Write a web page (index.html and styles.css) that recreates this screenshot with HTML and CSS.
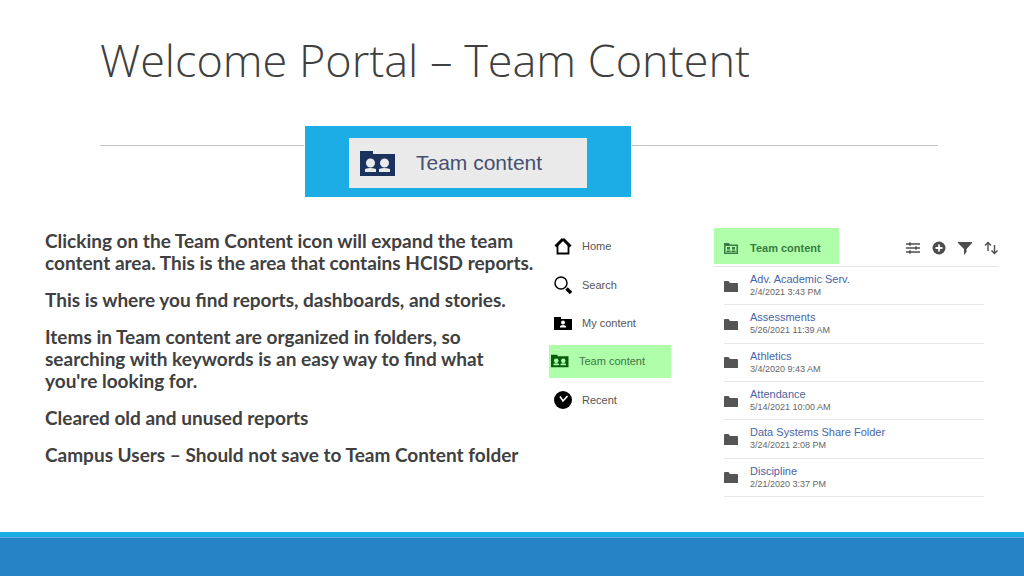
FILE: index.html
```html
<!DOCTYPE html>
<html lang="en">
<head>
<meta charset="utf-8">
<title>Welcome Portal – Team Content</title>
<link rel="stylesheet" href="styles.css">
</head>
<body>
<svg class="defs" aria-hidden="true">
  <symbol id="team" viewBox="0 0 36 27"><path fill-rule="evenodd" d="M0 1H13V4H35V26H0ZM6 13a4 4 0 1 0 9 0a4 4 0 1 0-9 0M20 13a4 4 0 1 0 9 0a4 4 0 1 0-9 0M5 22V19Q8 18 10 18Q13 18 16 19V22ZM19 22V19Q22 18 24 18Q27 18 30 19V22Z"/></symbol>
  <symbol id="folder" viewBox="0 0 14 11"><path d="M0 1Q0 0 1 0H4.500L6 2H13Q14 2 14 3V11H0Z"/></symbol>
</svg>
<main class="slide">
  <h1 class="title">Welcome Portal – Team Content</h1>
  <div class="divider">
    <hr class="rule">
    <div class="banner">
      <div class="banner-label"><svg class="banner-icon"><use href="#team"/></svg>Team content</div>
    </div>
  </div>
  <div class="content">
    <section class="copy">
      <p>Clicking on the Team Content icon will expand the team content area. This is the area that contains HCISD reports.</p>
      <p>This is where you find reports, dashboards, and stories.</p>
      <p>Items in Team content are organized in folders, so searching with keywords is an easy way to find what you're looking for.</p>
      <p>Cleared old and unused reports</p>
      <p>Campus Users – Should not save to Team Content folder</p>
    </section>
    <nav class="nav">
      <a class="nav-item" href="#home"><svg class="nav-icon" viewBox="0 0 18 18"><path d="M9 2L1.500 9.500M9 2L16.500 9.500" fill="none" stroke="currentColor" stroke-width="3"/><path d="M3.500 8V16.500H14.500V8" fill="none" stroke="currentColor" stroke-width="1.800"/></svg>Home</a>
      <a class="nav-item" href="#search"><svg class="nav-icon" viewBox="0 0 18 18"><circle cx="7" cy="7" r="6" fill="none" stroke="currentColor" stroke-width="1.500"/><path d="M12.500 12.500L17 17" stroke="currentColor" stroke-width="3.500"/></svg>Search</a>
      <a class="nav-item" href="#my"><svg class="nav-icon" viewBox="0 0 18 18"><path fill-rule="evenodd" d="M0 3H7V5H18V16H0ZM7 8.500a2 2 0 1 0 4 0a2 2 0 1 0-4 0M6 13.500V12Q9 10 12 12V13.500Z"/></svg>My content</a>
      <a class="nav-item nav-current" href="#team-content"><svg class="nav-icon"><use href="#team"/></svg>Team content</a>
      <a class="nav-item" href="#recent"><svg class="nav-icon" viewBox="0 0 18 18"><circle cx="9" cy="9" r="9"/><path d="M6 5.500L9 10L13.500 5" fill="none" stroke="#fff" stroke-width="1.600"/></svg>Recent</a>
    </nav>
    <section class="panel">
      <header class="panel-head">
        <h2 class="panel-title"><svg class="folder-icon" viewBox="0 0 14 11"><path fill-rule="evenodd" d="M0 0H5L6 1.500H14V11H0ZM1.500 3V9.500H12.500V3ZM3 4H6V6.500H3ZM8 4H11V6.500H8ZM2.500 7.500H6.500V9H2.500ZM7.500 7.500H11.500V9H7.500Z"/></svg>Team content</h2>
        <div class="tools">
          <button class="tool" aria-label="Settings"><svg viewBox="0 0 14 14"><path d="M0 3H14M0 7H14M0 11H14" stroke="currentColor" stroke-width="1.400"/><path d="M3 1.500H5V4.500H3ZM9 5.500H11V8.500H9ZM3 9.500H5V12.500H3Z"/></svg></button>
          <button class="tool" aria-label="Add"><svg viewBox="0 0 14 14"><circle cx="7" cy="7" r="6.500"/><path d="M7 3.500V10.500M3.500 7H10.500" stroke="#fff" stroke-width="1.800"/></svg></button>
          <button class="tool" aria-label="Filter"><svg viewBox="0 0 14 14"><path d="M0 1H14V2L8.500 8V11L6 14V8L0 2Z"/></svg></button>
          <button class="tool" aria-label="Sort"><svg viewBox="0 0 14 14"><path d="M4 10V2M1 4.500L4 1.500L7 4.500M10.500 4V12M7.500 9.500L10.500 12.500L13.500 9.500" fill="none" stroke="currentColor" stroke-width="1.400"/></svg></button>
        </div>
      </header>
      <ul class="files">
        <li class="file"><svg class="folder-icon"><use href="#folder"/></svg><div><a href="#f1">Adv. Academic Serv.</a><time>2/4/2021 3:43 PM</time></div></li>
        <li class="file"><svg class="folder-icon"><use href="#folder"/></svg><div><a href="#f2">Assessments</a><time>5/26/2021 11:39 AM</time></div></li>
        <li class="file"><svg class="folder-icon"><use href="#folder"/></svg><div><a href="#f3">Athletics</a><time>3/4/2020 9:43 AM</time></div></li>
        <li class="file"><svg class="folder-icon"><use href="#folder"/></svg><div><a href="#f4">Attendance</a><time>5/14/2021 10:00 AM</time></div></li>
        <li class="file"><svg class="folder-icon"><use href="#folder"/></svg><div><a href="#f5">Data Systems Share Folder</a><time>3/24/2021 2:08 PM</time></div></li>
        <li class="file"><svg class="folder-icon"><use href="#folder"/></svg><div><a href="#f6">Discipline</a><time>2/21/2020 3:37 PM</time></div></li>
      </ul>
    </section>
  </div>
  <footer class="footer"></footer>
</main>
</body>
</html>
```
FILE: styles.css
```css
* { box-sizing: border-box; }
body { margin: 0; background: #fff; color: #404040; font-family: "Liberation Sans", sans-serif; }
a { color: inherit; text-decoration: none; }
svg { fill: currentColor; flex: none; }
.defs { display: none; }
.slide { display: flex; flex-direction: column; min-height: 100vh; }
.title { margin: 0; padding: 30px 100px 0; font: 300 45px/60px "Open Sans", sans-serif; white-space: nowrap; }
.divider { display: grid; margin: 36px 86px 0 100px; }
.rule { grid-area: 1 / 1; width: 100%; height: 1px; margin: 19px 0 0; border: 0; background: #c4c4c4; }
.banner { grid-area: 1 / 1; z-index: 1; justify-self: start; margin-left: 205px; padding: 12px 44px 9px; background: #1cade4; box-shadow: 0 0 0 1px #fff; }
.banner-label { display: flex; align-items: center; gap: 20px; width: 238px; height: 50px; padding-left: 11px; background: #eaeaea; color: #454f70; font-size: 21px; }
.banner-icon { width: 36px; height: 27px; color: #1b325f; }
.content { display: grid; grid-template-columns: 490px 122px 1fr; column-gap: 14px; align-items: start; padding: 31px 26px 0 45px; }
.copy { padding-top: 2px; font: 700 19px/22px Lato, sans-serif; }
.copy p { margin: 0 0 15px; }
.nav { display: grid; grid-auto-rows: 1fr; min-height: 192px; margin-top: -1px; font-size: 11px; color: #555; }
.nav-item { display: flex; align-items: center; gap: 10px; padding-left: 5px; }
.nav-icon { width: 18px; height: 18px; color: #000; }
.nav-current { align-self: center; height: 33px; padding-left: 2px; background: #afffaa; color: #3d7545; }
.nav-current .nav-icon { color: #075c0b; }
.panel { margin-left: 29px; color: #555; }
.panel-head { display: flex; justify-content: space-between; align-items: start; padding-bottom: 2px; border-bottom: 1px solid #e4e4e4; }
.panel-title { display: flex; align-items: center; gap: 12px; width: 125px; height: 36px; margin: 0; padding: 4px 0 0 10px; background: #afffaa; color: #397b42; font-size: 11px; }
.folder-icon { width: 14px; height: 11px; }
.tools { display: flex; gap: 12px; padding-top: 13px; }
.tool { display: flex; padding: 0; border: 0; background: none; color: #4d4d4d; }
.tool svg { width: 14px; height: 14px; }
.files { display: grid; grid-auto-rows: 1fr; min-height: 230px; margin: 0 14px 0 10px; padding: 0; list-style: none; }
.file { display: flex; align-items: center; gap: 12px; padding-top: 1px; border-bottom: 1px solid #e8e8e8; font-size: 11px; line-height: 13px; }
.file a { display: block; color: #4965a6; }
.file time { display: block; font-size: 9px; color: #666; }
.footer { margin-top: auto; height: 44px; background: #2683c6; border-top: 5px solid #1cade4; box-shadow: inset 0 1px #5aaee0; }
```
